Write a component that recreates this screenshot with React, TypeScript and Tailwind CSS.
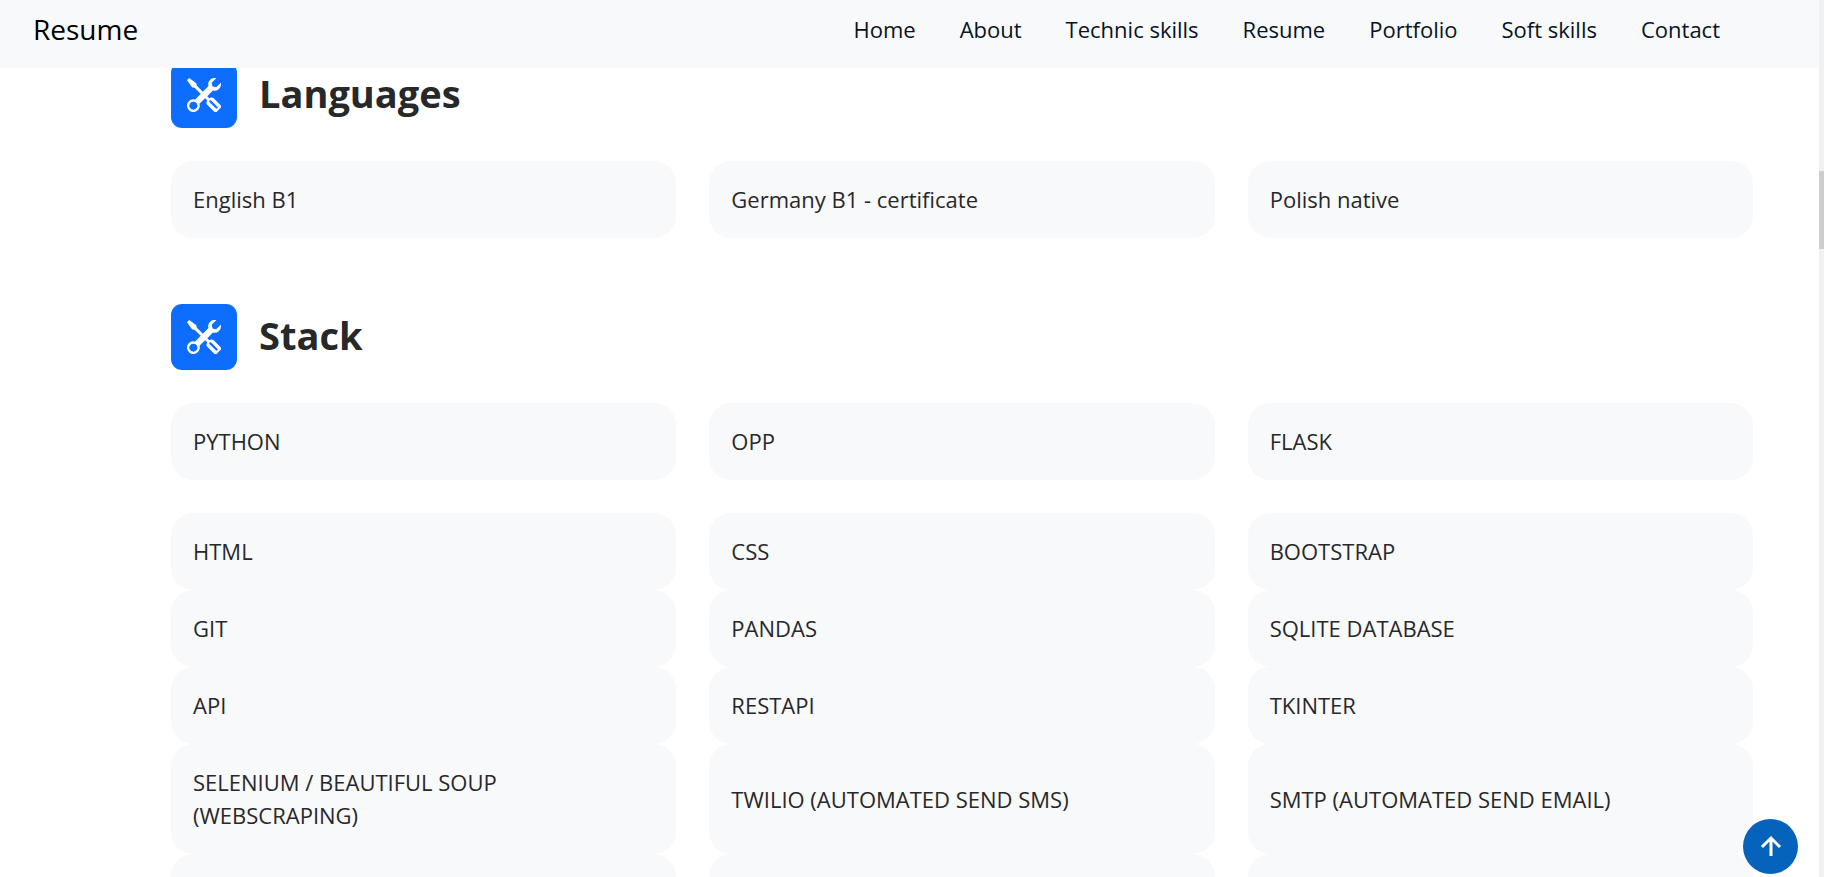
import { BsTools } from "react-icons/bs";
import { BiUpArrowAlt } from "react-icons/bi";

const links = ["Home", "About", "Technic skills", "Resume", "Portfolio", "Soft skills", "Contact"];

const languages = ["English B1", "Germany B1 - certificate", "Polish native"];

const basics = ["PYTHON", "OPP", "FLASK"];

const tools = [
  "HTML",
  "CSS",
  "BOOTSTRAP",
  "GIT",
  "PANDAS",
  "SQLITE DATABASE",
  "API",
  "RESTAPI",
  "TKINTER",
  "SELENIUM / BEAUTIFUL SOUP (WEBSCRAPING)",
  "TWILIO (AUTOMATED SEND SMS)",
  "SMTP (AUTOMATED SEND EMAIL)",
  "",
  "",
  "",
];

function SectionTitle({ title }: { title: string }) {
  return (
    <div className="flex items-center gap-[22px]">
      <div className="flex size-[66px] items-center justify-center rounded-[11px] bg-[#0d6efd] text-white">
        <BsTools size={34} aria-hidden="true" />
      </div>
      <h2 className="pb-1 text-[38px] leading-[46px] font-bold">{title}</h2>
    </div>
  );
}

function CardGrid({ items }: { items: string[] }) {
  return (
    <ul className="mt-[33px] grid grid-cols-3 gap-x-[33px]">
      {items.map((item, i) => (
        <li key={i} className="flex min-h-[77px] items-center rounded-[22px] bg-[#f8f9fb] p-[22px]">
          {item}
        </li>
      ))}
    </ul>
  );
}

export default function App() {
  return (
    <div className="flex h-screen overflow-hidden bg-white font-['Open_Sans',sans-serif] text-[22px] leading-[33px] text-[#272829]">
      <div className="relative min-w-0 flex-1">
        <header className="absolute inset-x-0 top-0 z-10 flex h-[68px] items-start justify-between bg-[#f8f9fb] pt-[13px] pr-[99px] pl-[33px]">
          <a href="#top" className="text-[28px] text-black">
            Resume
          </a>
          <nav className="flex gap-[44px] text-[#05141f]">
            {links.map((link) => (
              <a key={link} href="#top">
                {link}
              </a>
            ))}
          </nav>
        </header>

        <main id="top" className="h-full overflow-hidden pt-[62px] pr-[66px] pl-[171px]">
          <section>
            <SectionTitle title="Languages" />
            <CardGrid items={languages} />
          </section>
          <section className="mt-[66px]">
            <SectionTitle title="Stack" />
            <CardGrid items={basics} />
            <CardGrid items={tools} />
          </section>
        </main>

        <a
          href="#top"
          aria-label="Back to top"
          className="absolute right-[21px] bottom-[3px] z-10 flex size-[55px] items-center justify-center rounded-full bg-[#0563bb] text-white"
        >
          <BiUpArrowAlt size={36} aria-hidden="true" />
        </a>
      </div>
      <div className="w-[5px] bg-[#f1f1f1] pt-[171px]" aria-hidden="true">
        <div className="h-[78px] bg-[#cdcdcd]" />
      </div>
    </div>
  );
}
